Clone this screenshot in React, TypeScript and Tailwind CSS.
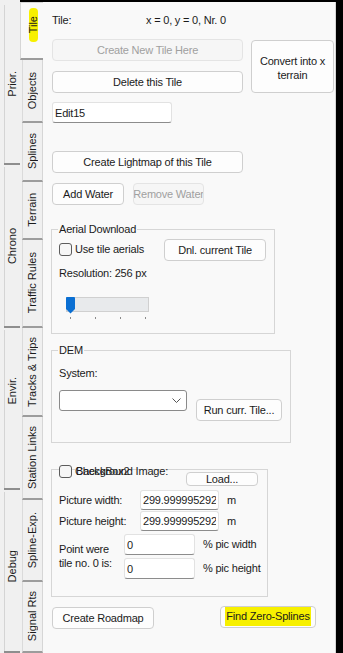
import React from 'react';

type Props = { children?: React.ReactNode; className?: string };

const Btn = ({ children, className = '', disabled = false }: Props & { disabled?: boolean }) => (
  <button
    type="button"
    disabled={disabled}
    className={`flex shrink-0 items-center justify-center overflow-hidden whitespace-nowrap rounded-[4px] border text-center text-[11px] leading-[14px] tracking-[-0.2px] ${
      disabled ? 'border-[#e4e4e4] bg-[#f6f6f6] text-[#a0a0a0]' : 'border-[#cfcfcf] bg-[#fdfdfd] text-[#1b1b1b]'
    } ${className}`}
  >
    {children}
  </button>
);

const TextBox = ({ value, className = '' }: { value: string; className?: string }) => (
  <input
    readOnly
    value={value}
    className={`shrink-0 rounded-[3px] border border-[#e2e2e2] border-b-[#8c8c8c] bg-white px-[2px] text-[11px] tracking-[-0.2px] text-[#1b1b1b] outline-none ${className}`}
  />
);

const CheckBox = () => (
  <span className="block h-[13px] w-[13px] shrink-0 rounded-[3px] border border-[#5c5c5c] bg-[#f6f6f6]" />
);

const Group = ({ title, className = '', children }: Props & { title?: string }) => (
  <div className={`relative -ml-px shrink-0 border border-[#d6d6d6] pl-[7px] ${className}`}>
    {title && <span className="absolute -top-[8px] left-[6px] bg-[#f9f9f9] px-px leading-[14px]">{title}</span>}
    {children}
  </div>
);

const Vertical = ({ children }: Props) => (
  <span className="whitespace-nowrap leading-[13px] [writing-mode:vertical-rl] rotate-180">{children}</span>
);

const OuterTab = ({ label, className = '' }: { label: string; className?: string }) => (
  <>
    <div className={`flex shrink-0 items-center justify-center border-l border-[#d4d4d4] ${className}`}>
      <Vertical>{label}</Vertical>
    </div>
    <div className="h-[2px] shrink-0 bg-[#8e8e8e]" />
  </>
);

const InnerTab = ({ label, className = '' }: { label: string; className?: string }) => (
  <div
    className={`ml-[2px] flex shrink-0 items-center justify-center border-b-2 border-l border-r border-b-[#9c9c9c] border-l-[#dadada] border-r-[#d6d6d6] bg-[#f0f0f0] ${className}`}
  >
    <Vertical>{label}</Vertical>
  </div>
);

export default function App() {
  return (
    <div className="flex h-[653px] w-[343px] overflow-hidden bg-[#f0f0f0] text-[11px] text-[#1b1b1b] [font-family:'Liberation_Sans',Arial,sans-serif]">
      {/* outer tab strip */}
      <div className="flex w-[20px] shrink-0 flex-col gap-0 pl-[4px] pt-[5px]">
        <OuterTab label="Prior." className="h-[158px]" />
        <div className="h-[2px] shrink-0" />
        <OuterTab label="Chrono" className="h-[159px]" />
        <div className="h-[2px] shrink-0" />
        <OuterTab label="Envir." className="h-[158px] pb-[36px]" />
        <div className="h-[2px] shrink-0" />
        <OuterTab label="Debug" className="h-[159px] pb-[10px]" />
      </div>

      <div className="flex flex-1 flex-col">
        <div className="h-[2px] shrink-0 bg-black" />
        <div className="flex flex-1">
          {/* inner tab strip */}
          <div className="flex w-[23px] shrink-0 flex-col">
            <div className="flex h-[58px] shrink-0 flex-col items-center border-b-2 border-l border-t border-b-[#9c9c9c] border-l-[#d6d6d6] border-t-[#d6d6d6] bg-[#f9f9f9] pl-[2px] pt-[5px]">
              <div className="flex h-[34px] w-[9px] items-center justify-center rounded-[4px] bg-[#f7f000]">
                <Vertical>Tile</Vertical>
              </div>
            </div>
            <InnerTab label="Objects" className="h-[63px]" />
            <InnerTab label="Splines" className="h-[59px]" />
            <InnerTab label="Terrain" className="h-[58px]" />
            <InnerTab label="Traffic Rules" className="h-[88px]" />
            <InnerTab label="Tracks & Trips" className="h-[89px]" />
            <InnerTab label="Station Links" className="h-[83px]" />
            <InnerTab label="Spline-Exp." className="h-[82px]" />
            <InnerTab label="Signal Rts" className="h-[71px]" />
          </div>

          {/* page */}
          <div className="flex flex-1 flex-col border-r border-[#d6d6d6] bg-[#f9f9f9] pl-[9px] pt-[11px] tracking-[-0.2px]">
            <div className="flex leading-[14px]">
              <span className="w-[94px]">Tile:</span>
              <span>x = 0, y = 0, Nr. 0</span>
            </div>

            <div className="mt-[12px] flex items-start">
              <div className="flex w-[191px] flex-col gap-[10px]">
                <Btn disabled className="h-[22px] w-[191px]">Create New Tile Here</Btn>
                <Btn className="h-[22px] w-[191px]">Delete this Tile</Btn>
              </div>
              <Btn className="ml-[8px] mt-px h-[53px] w-[83px] pt-[2px]">
                Convert into x
                <br />
                terrain
              </Btn>
            </div>

            <TextBox value="Edit15" className="mt-[9px] h-[21px] w-[120px]" />

            <Btn className="mt-[28px] h-[22px] w-[191px]">Create Lightmap of this Tile</Btn>

            <div className="mt-[10px] flex gap-[9px]">
              <Btn className="h-[22px] w-[72px]">Add Water</Btn>
              <Btn disabled className="h-[22px] w-[71px]">Remove Water</Btn>
            </div>

            <Group title="Aerial Download" className="mt-[24px] h-[105px] w-[224px]">
              <div className="mt-[9px] flex items-start">
                <div className="mt-[3px] flex w-[105px] items-center gap-[3px]">
                  <CheckBox />
                  <span className="leading-[14px]">Use tile aerials</span>
                </div>
                <Btn className="h-[22px] w-[102px]">Dnl. current Tile</Btn>
              </div>
              <div className="mt-[5px] leading-[14px]">Resolution: 256 px</div>
              <div className="relative ml-[7px] mt-[17px] h-[15px] w-[83px] border border-[#d0d0d0] bg-[#e8eaec]">
                <svg className="absolute -left-px -top-px" width="9" height="17" viewBox="0 0 9 17">
                  <path d="M1 0 H8 Q9 0 9 1 V12 L4.5 16.5 L0 12 V1 Q0 0 1 0 Z" fill="#0a6fd3" />
                </svg>
              </div>
              <div className="ml-[11px] mt-[5px] flex gap-[24px]">
                <span className="h-[2px] w-px bg-[#8a8a8a]" />
                <span className="h-[2px] w-px bg-[#8a8a8a]" />
                <span className="h-[2px] w-px bg-[#8a8a8a]" />
                <span className="h-[2px] w-px bg-[#8a8a8a]" />
              </div>
            </Group>

            <Group title="DEM" className="mt-[16px] h-[93px] w-[240px]">
              <div className="mt-[15px] leading-[14px]">System:</div>
              <div className="mt-[10px] flex items-start">
                <div className="flex h-[21px] w-[128px] items-center justify-end rounded-[3px] border border-[#8a8a8a] bg-white pr-[5px]">
                  <svg width="9" height="5" viewBox="0 0 9 5">
                    <path d="M0.5 0.5 L4.5 4.5 L8.5 0.5" fill="none" stroke="#555" strokeWidth="1" />
                  </svg>
                </div>
                <Btn className="ml-[9px] mt-[9px] h-[22px] w-[86px]">Run curr. Tile...</Btn>
              </div>
            </Group>

            <Group className="mt-[26px] h-[128px] w-[217px]">
              <div className="absolute -top-[6px] left-[7px] flex items-center gap-[3px]">
                <CheckBox />
                <span className="relative bg-[#f9f9f9] leading-[14px]">
                  <span className="text-[#333]">CheckBox2</span>
                  <span className="absolute left-[1px] top-0 whitespace-nowrap bg-transparent pr-[2px]">Background Image:</span>
                </span>
              </div>
              <Btn className="ml-[127px] mt-[2px] h-[14px] w-[72px]">Load...</Btn>
              <div className="mt-[4px] flex items-center">
                <span className="w-[81px] leading-[14px]">Picture width:</span>
                <TextBox value="299.999995292" className="h-[20px] w-[79px]" />
                <span className="ml-[8px]">m</span>
              </div>
              <div className="mt-px flex items-center">
                <span className="w-[81px] leading-[14px]">Picture height:</span>
                <TextBox value="299.999995292" className="h-[20px] w-[79px]" />
                <span className="ml-[8px]">m</span>
              </div>
              <div className="mt-[3px] flex">
                <div className="w-[65px] pt-[8px] leading-[14px]">
                  Point were
                  <br />
                  tile no. 0 is:
                </div>
                <div className="flex flex-col gap-[3px]">
                  <div className="flex items-center">
                    <TextBox value="0" className="h-[21px] w-[71px]" />
                    <span className="ml-[8px]">% pic width</span>
                  </div>
                  <div className="flex items-center">
                    <TextBox value="0" className="h-[21px] w-[71px]" />
                    <span className="ml-[8px]">% pic height</span>
                  </div>
                </div>
              </div>
            </Group>

            <div className="mt-[10px] flex items-start">
              <Btn className="h-[22px] w-[102px]">Create Roadmap</Btn>
              <Btn className="-mt-px ml-[66px] h-[22px] w-[96px]">
                <span className="mb-[3px] inline-block h-[20px] bg-[#f7f000] px-[1px] leading-[20px]">Find Zero-Splines</span>
              </Btn>
            </div>
          </div>
          <div className="w-[7px] shrink-0 bg-black" />
        </div>
      </div>
    </div>
  );
}
